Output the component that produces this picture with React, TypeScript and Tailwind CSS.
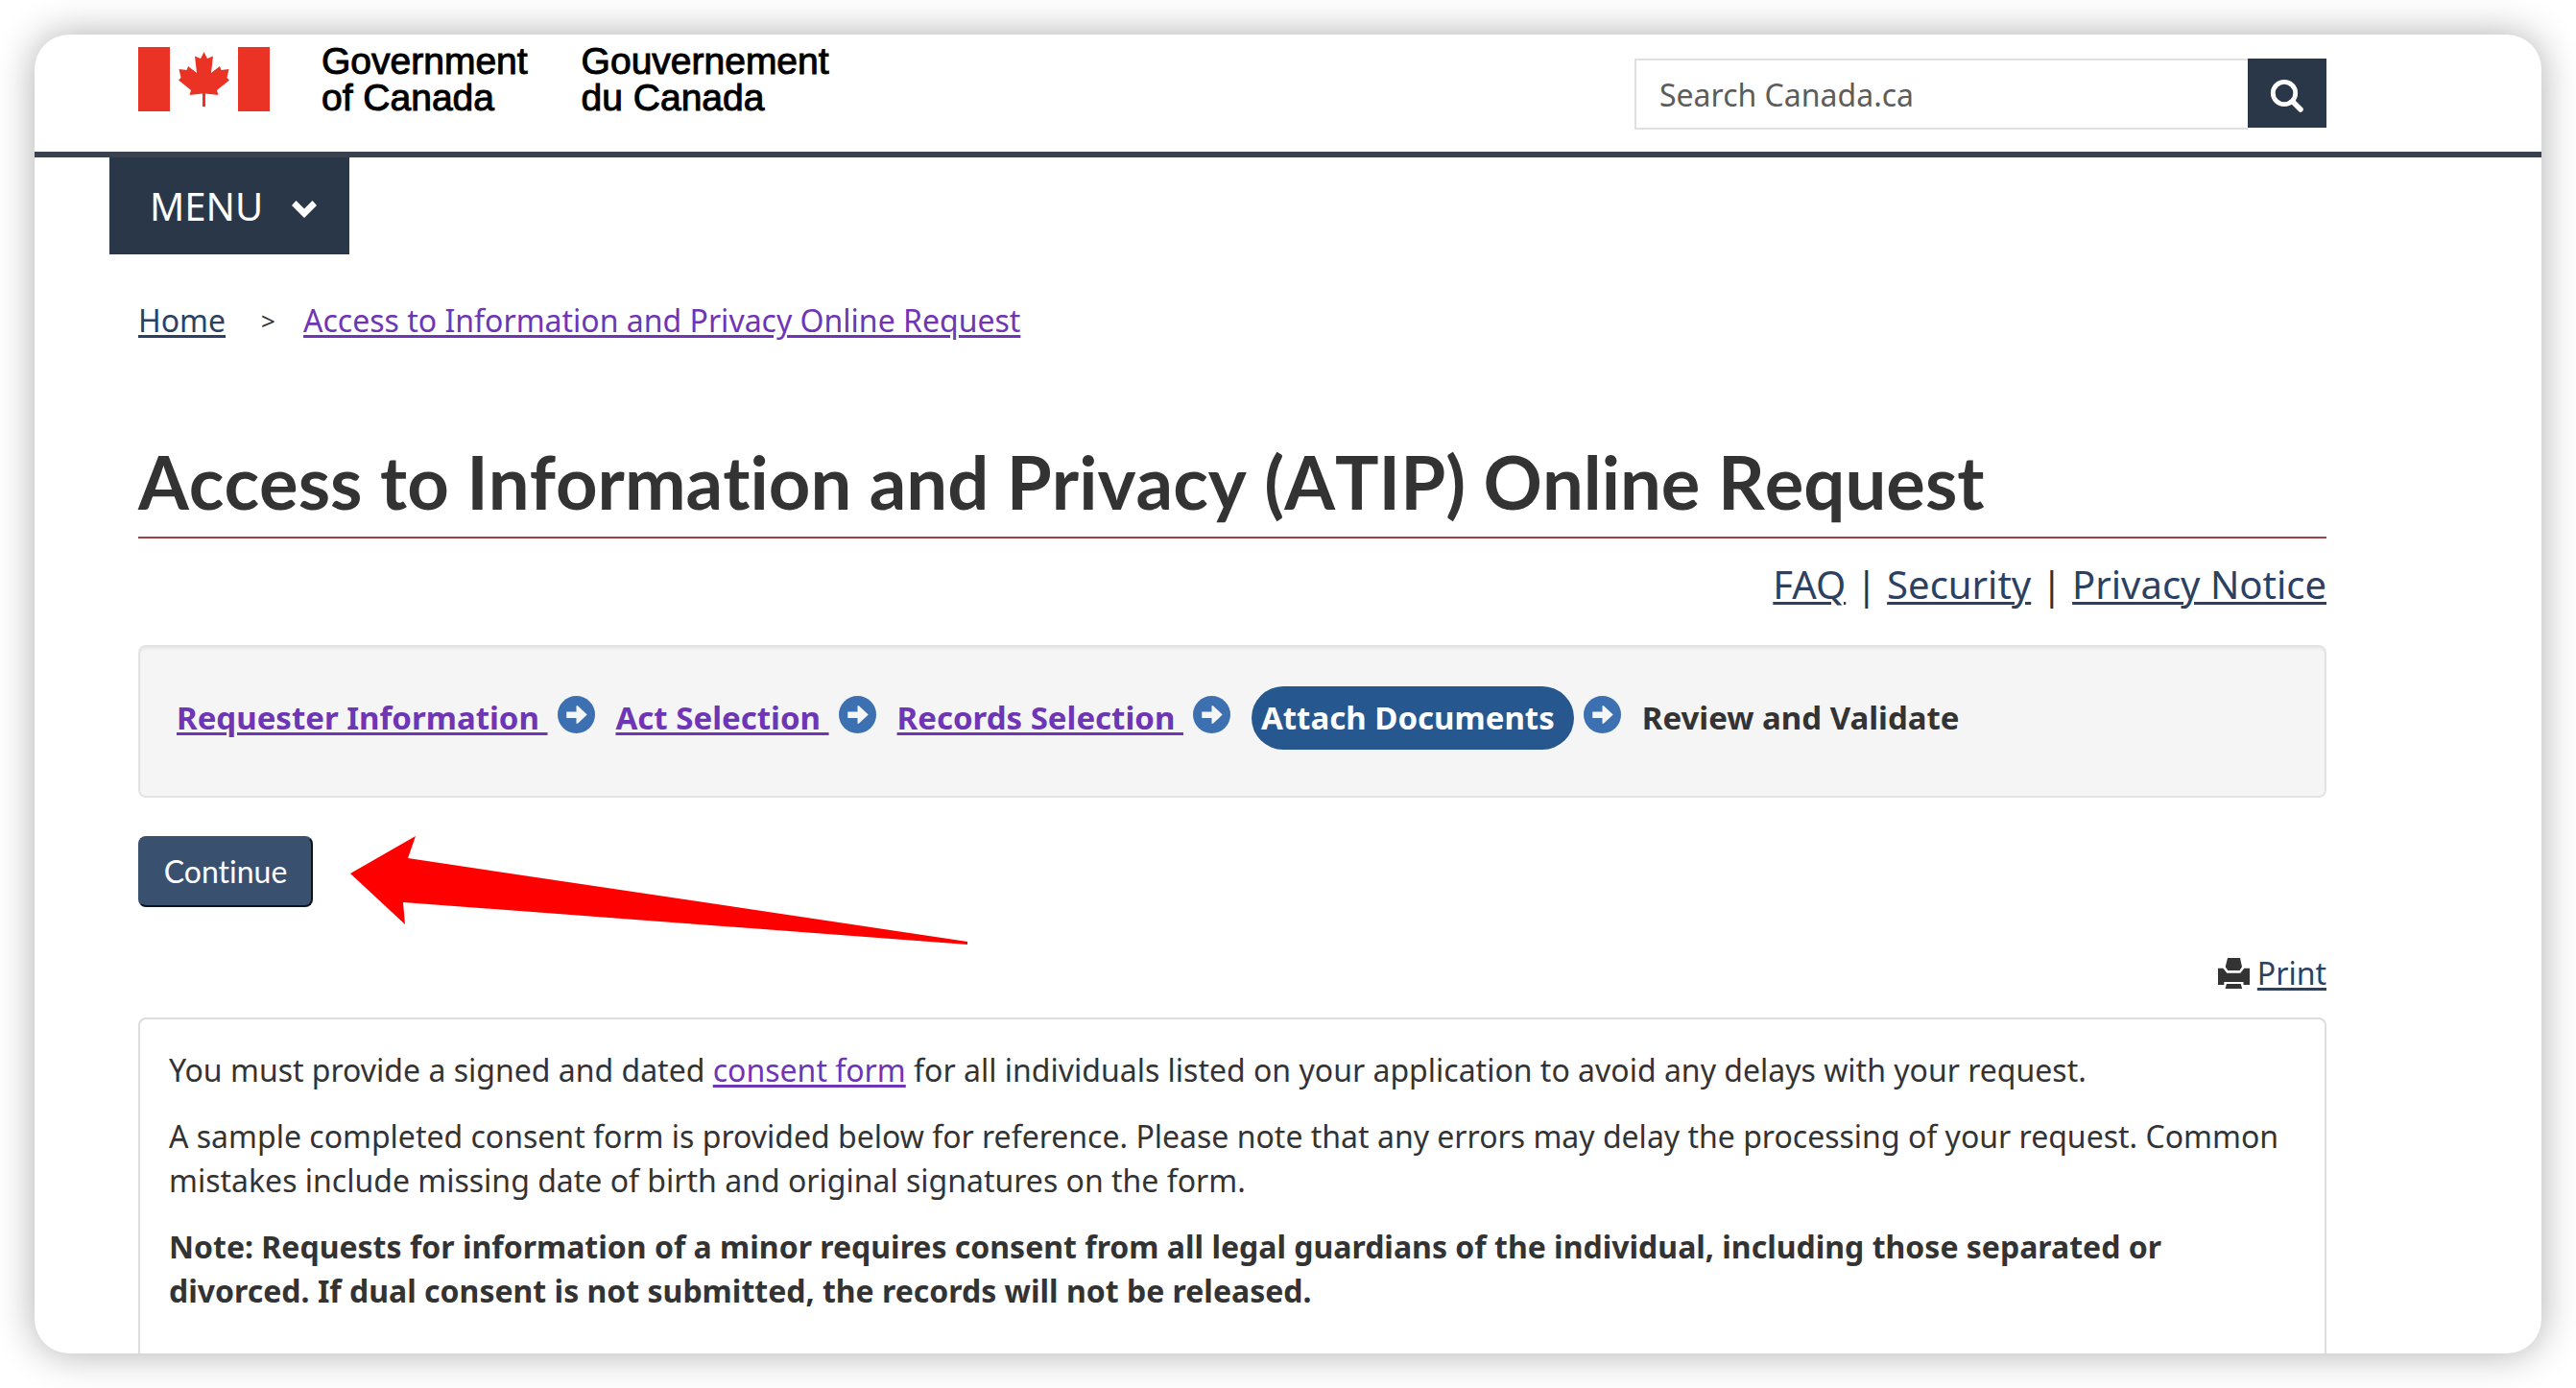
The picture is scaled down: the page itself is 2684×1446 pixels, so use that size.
import React from "react";

const link = "text-[#2c4162] underline decoration-[3px] underline-offset-3";
const visited = "text-[#6e35b5] underline decoration-[3px] underline-offset-3";

function Flag() {
  return (
    <svg viewBox="0 0 137 67" className="h-[67px] w-[137px] shrink-0" role="img" aria-label="Flag of Canada">
      <g fill="#eb3325">
        <path d="M0 0h33v67H0zM104 0h33v67h-33z" />
        <path d="M68.500 5L72 12L78 9.500L76 27L85 20L86.500 24L94.500 23L92.500 32L95 34.500L82 45L83.500 50L70 48.500V62H67V48.500L53.500 50L55 45L42 34.500L44.500 32L42.500 23L50.500 24L52 20L61 27L59 9.500L65 12Z" />
      </g>
    </svg>
  );
}

function CircleArrow() {
  return (
    <svg viewBox="0 0 40 40" className="mb-2 h-[39px] w-[39px] shrink-0" aria-hidden="true">
      <circle cx="20" cy="20" r="20" fill="#3c70b0" />
      <path d="M9.500 17h10.500v-6.500h1.500L31.500 20L21.500 29.500H20V23.500H9.500z" fill="#f5f5f5" />
    </svg>
  );
}

function Step({ children }: { children: string }) {
  return (
    <>
      <li>
        <a href="#step" className={`${visited} whitespace-pre`}>{children + " "}</a>
      </li>
      <li className="pr-[22px] pl-[10px]"><CircleArrow /></li>
    </>
  );
}

export default function App() {
  return (
    <div className="h-screen bg-white p-9 font-['Noto_Sans',sans-serif] text-[32px] leading-[46px] text-[#333]">
      <div className="h-full overflow-hidden rounded-[36px] bg-white shadow-[0_0_40px_rgba(0,0,0,0.32)]">
        <header>
          <div className="flex h-[122px] items-start justify-between pr-[224px] pl-[108px]">
            <div className="flex items-start font-['Liberation_Sans',sans-serif] text-[39px] leading-[38px] text-black">
              <div className="mt-[13px]"><Flag /></div>
              <p className="mt-[9px] ml-[54px] [-webkit-text-stroke:1px_black]">Government<br />of Canada</p>
              <p className="mt-[9px] ml-[56px] [-webkit-text-stroke:1px_black]">Gouvernement<br />du Canada</p>
            </div>
            <form className="flex items-start pt-[25px]" onSubmit={(e) => e.preventDefault()}>
              <input
                type="search"
                aria-label="Search Canada.ca"
                placeholder="Search Canada.ca"
                className="h-[74px] w-[639px] border-2 border-r-0 border-[#e0e0e0] px-6 placeholder:text-[#5c5c5c] placeholder:opacity-100"
              />
              <button type="submit" aria-label="Search" className="flex h-[72px] w-[82px] items-center justify-center bg-[#2a3749] pt-1.5 text-white">
                <svg viewBox="0 0 36 36" className="h-9 w-9" fill="none" stroke="currentColor" aria-hidden="true">
                  <circle cx="15" cy="15" r="11.700" strokeWidth="4.800" />
                  <path d="M24 24l8 8" strokeWidth="5.500" strokeLinecap="round" />
                </svg>
              </button>
            </form>
          </div>
          <div className="h-[6px] bg-[#38414d]" />
          <nav className="pl-[78px]">
            <button type="button" className="flex h-[101px] w-[250px] items-center bg-[#2a3749] pl-[42px] text-[40px] text-white">
              MENU
              <svg viewBox="0 0 26 18" className="mt-1.5 ml-[30px] h-[18px] w-[26px]" aria-hidden="true">
                <path d="M0 5L4.500 0L13 8.500L21.500 0L26 5L13 18Z" fill="currentColor" />
              </svg>
            </button>
          </nav>
        </header>

        <main className="pr-[224px] pl-[108px]">
          <nav aria-label="Breadcrumb" className="mt-[46px]">
            <ol className="flex items-center">
              <li><a href="#home" className={link}>Home</a></li>
              <li aria-hidden="true" className="w-[81px] pl-[37px] text-[26px]">&gt;</li>
              <li><a href="#atip" className={visited}>Access to Information and Privacy Online Request</a></li>
            </ol>
          </nav>

          <h1 className="mt-[97px] border-b-2 border-[#a14145] pb-[9px] font-['Lato',sans-serif] text-[76px] leading-[96px] font-bold [font-kerning:none] [font-variant-ligatures:none]">
            Access to Information and Privacy (ATIP) Online Request
          </h1>

          <p className="mt-[19px] text-right text-[40px] leading-[57px]">
            <a href="#faq" className={link}>FAQ</a> | <a href="#security" className={link}>Security</a> | <a href="#privacy" className={link}>Privacy Notice</a>
          </p>

          <section aria-label="Progress" className="mt-[35px] h-[159px] rounded-lg border-2 border-[#e3e3e3] bg-[#f5f5f5] px-[38px] pt-[41px] shadow-[inset_0_2px_2px_rgba(0,0,0,0.05)]">
            <ol className="flex items-center text-[33px] font-bold">
              <Step>Requester Information</Step>
              <Step>Act Selection</Step>
              <Step>Records Selection</Step>
              <li aria-current="step" className="rounded-full bg-[#26578f] py-[10px] pr-5 pl-[10px] text-white">Attach Documents</li>
              <li className="pr-[22px] pl-[10px]"><CircleArrow /></li>
              <li>Review and Validate</li>
            </ol>
          </section>

          <div className="relative mt-10">
            <button type="button" className="h-[74px] w-[182px] rounded-lg border-2 border-[#39506f] border-r-[#0b131f] border-b-[#0b131f] bg-[#39506f] font-['Lato',sans-serif] text-white [font-variant-ligatures:none]">
              Continue
            </button>
            <svg viewBox="0 0 645 114" className="absolute top-0 left-[220px] h-[114px] w-[645px]" aria-hidden="true">
              <path d="M1 39L69 0L61 23L644 110V113L56 69L58 92Z" fill="#f00" />
            </svg>
          </div>

          <p className="mt-[46px] flex items-center justify-end gap-2">
            <svg viewBox="0 0 33 32" className="h-8 w-[33px]" fill="currentColor" aria-hidden="true">
              <path d="M10 0h13l2 9.300L22.500 13H10.300L7.700 9.300ZM0 10.700h5.300l4 5h14l4-5H33V28h-6.500v-3H6.300v3H0ZM9 27h14.700l1.500 5H7.500Z" />
            </svg>
            <a href="#print" className={link}>Print</a>
          </p>

          <section className="mt-[23px] flex h-[400px] flex-col gap-[23px] rounded-lg border-2 border-[#ddd] px-[30px] pt-[30px]">
            <p>You must provide a signed and dated <a href="#consent" className={visited}>consent form</a> for all individuals listed on your application to avoid any delays with your request.</p>
            <p>A sample completed consent form is provided below for reference. Please note that any errors may delay the processing of your request. Common mistakes include missing date of birth and original signatures on the form.</p>
            <p className="font-bold">Note: Requests for information of a minor requires consent from all legal guardians of the individual, including those separated or divorced. If dual consent is not submitted, the records will not be released.</p>
          </section>
        </main>
      </div>
    </div>
  );
}
